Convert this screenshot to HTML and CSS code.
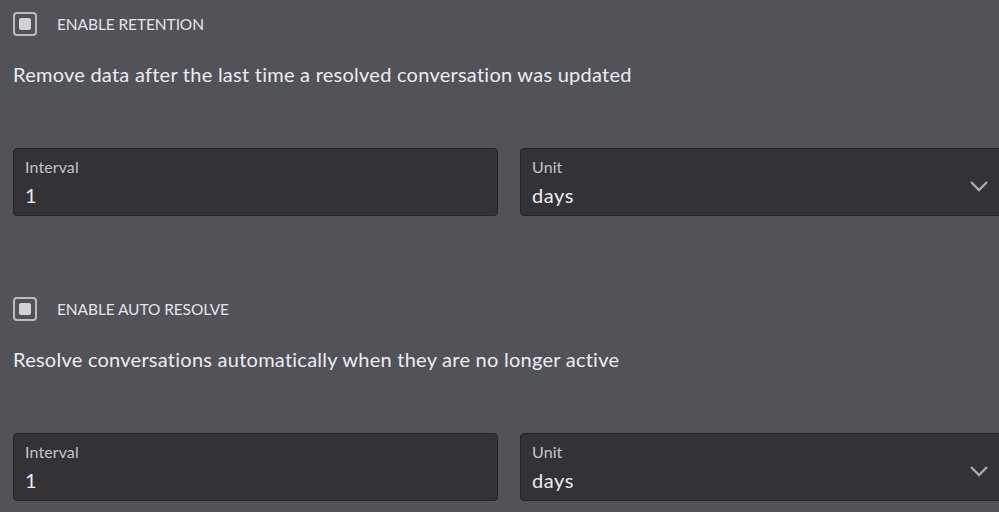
FILE: index.html
```html
<!DOCTYPE html>
<html>
<head>
<meta charset="utf-8">
<link rel="stylesheet" href="styles.css">
</head>
<body>
<div class="page">
  <section class="section">
    <label class="check-row">
      <span class="checkbox"><span class="checkbox-fill"></span></span>
      <span class="check-label">ENABLE RETENTION</span>
    </label>
    <p class="desc">Remove data after the last time a resolved conversation was updated</p>
    <div class="fields">
      <div class="field">
        <span class="field-label">Interval</span>
        <span class="field-value">1</span>
      </div>
      <div class="field select">
        <span class="field-label">Unit</span>
        <span class="field-value">days</span>
        <svg class="chevron" width="20" height="12" viewBox="0 0 20 12"><path d="M2 2 L10 10 L18 2" fill="none" stroke="#a9a9ad" stroke-width="2.4"/></svg>
      </div>
    </div>
  </section>
  <section class="section second">
    <label class="check-row">
      <span class="checkbox"><span class="checkbox-fill"></span></span>
      <span class="check-label">ENABLE AUTO RESOLVE</span>
    </label>
    <p class="desc">Resolve conversations automatically when they are no longer active</p>
    <div class="fields">
      <div class="field">
        <span class="field-label">Interval</span>
        <span class="field-value">1</span>
      </div>
      <div class="field select">
        <span class="field-label">Unit</span>
        <span class="field-value">days</span>
        <svg class="chevron" width="20" height="12" viewBox="0 0 20 12"><path d="M2 2 L10 10 L18 2" fill="none" stroke="#a9a9ad" stroke-width="2.4"/></svg>
      </div>
    </div>
  </section>
</div>
</body>
</html>
```
FILE: styles.css
```css
html, body {
  margin: 0;
  padding: 0;
  background: #525259;
  overflow: hidden;
}
body {
  width: 999px;
  height: 512px;
  font-family: "Lato", "Inter", sans-serif;
  color: #ececee;
}
.page {
  width: 1020px;
  padding: 12px 0 0 13px;
}
.section {
  display: flex;
  flex-direction: column;
}
.second {
  margin-top: 81px;
}
.check-row {
  display: flex;
  align-items: center;
  height: 24px;
}
.checkbox {
  width: 24px;
  height: 24px;
  box-sizing: border-box;
  border: 2px solid #bcbcc0;
  border-radius: 4px;
  display: flex;
  align-items: center;
  justify-content: center;
}
.checkbox-fill {
  width: 12px;
  height: 12px;
  background: #d2d2d6;
  border-radius: 2px;
}
.check-label {
  margin-left: 20px;
  font-size: 15.5px;
  letter-spacing: -0.1px;
  color: #e4e4e6;
}
.desc {
  margin: 26px 0 0 0;
  font-size: 20px;
  line-height: 24px;
  height: 24px;
  letter-spacing: 0.25px;
  color: #ececee;
}
.fields {
  margin-top: 62px;
  display: flex;
  gap: 22px;
}
.field {
  position: relative;
  width: 485px;
  height: 68px;
  box-sizing: border-box;
  background: #333337;
  border: 1px solid #242427;
  border-radius: 4px;
  padding: 8px 11px 0;
  display: flex;
  flex-direction: column;
}
.field-label {
  font-size: 16px;
  line-height: 20px;
  letter-spacing: 0.1px;
  color: #c3c3c7;
}
.field-value {
  margin-top: 6px;
  font-size: 20px;
  line-height: 24px;
  letter-spacing: 0.6px;
  color: #ececee;
}
.chevron {
  position: absolute;
  right: 15px;
  top: 31px;
}
```
